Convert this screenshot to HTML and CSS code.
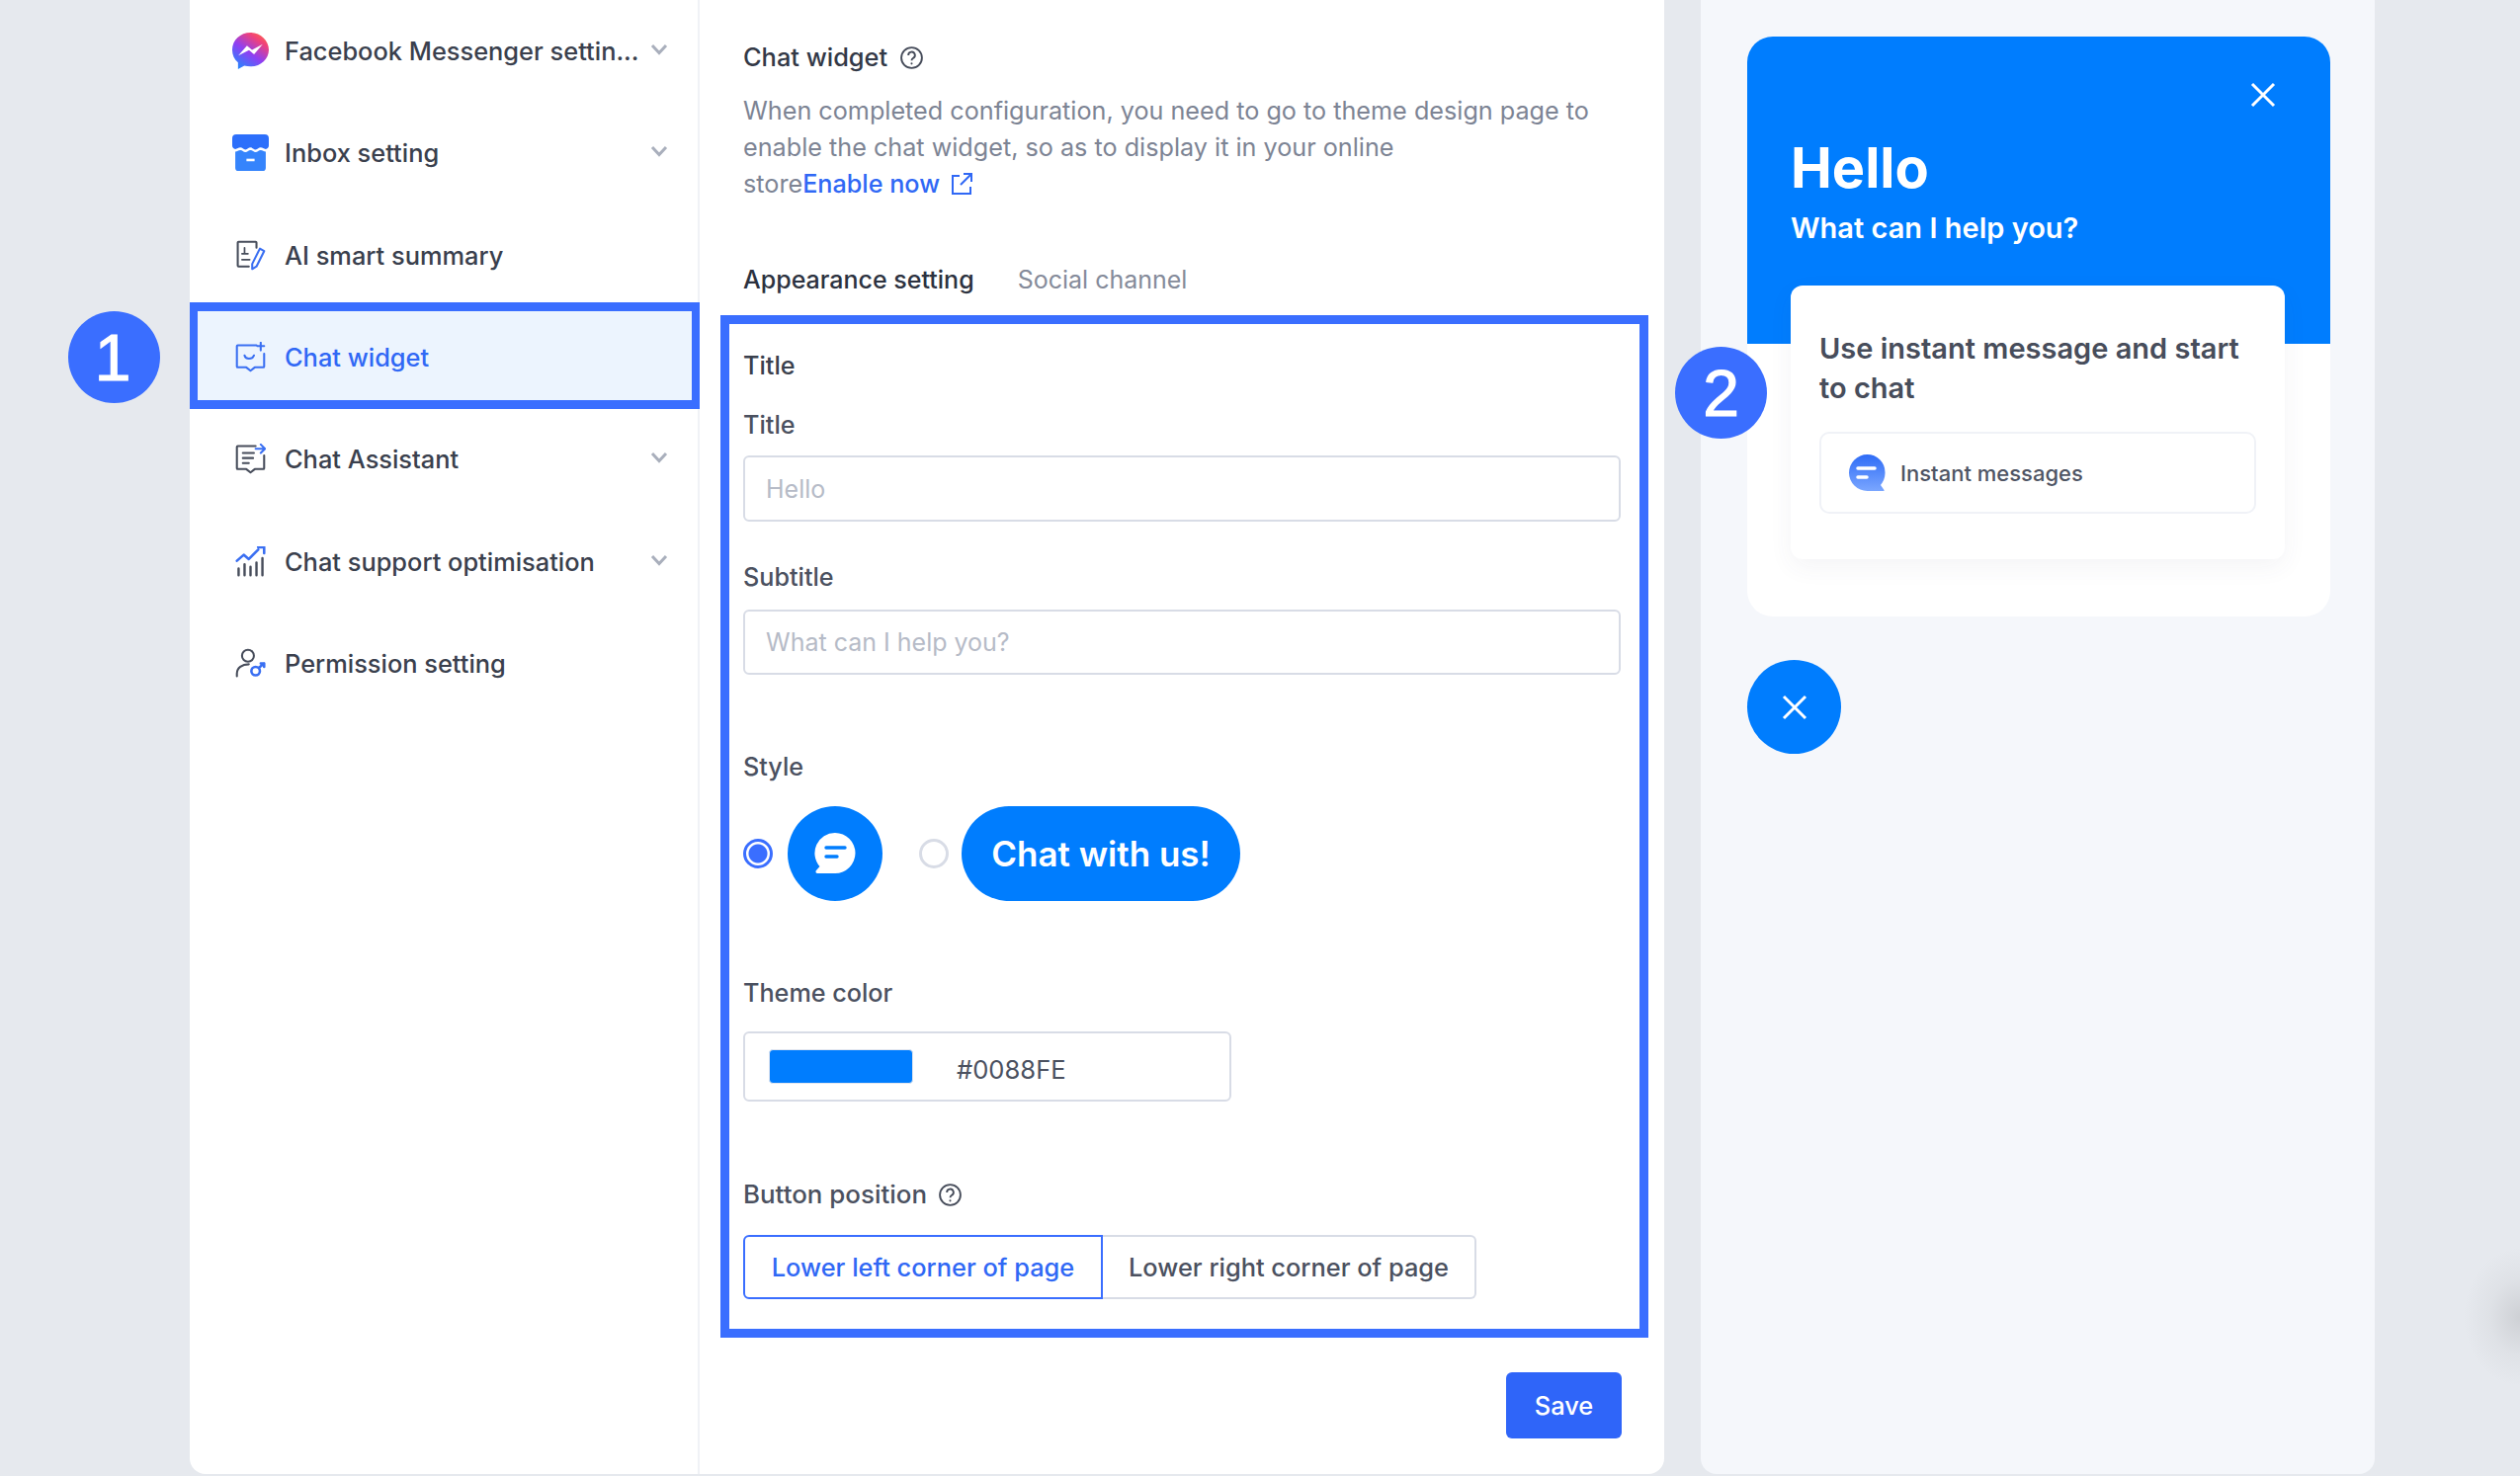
FILE: index.html
```html
<!DOCTYPE html>
<html lang="en">
<head>
  <meta charset="UTF-8">
  <meta name="viewport" content="width=device-width, initial-scale=1.0">
  <title>Chat widget</title>
  <link rel="stylesheet" href="styles.css">
</head>
<body>

<div class="page">
  <div class="settings-card">
    <nav class="side-nav">
      <div class="nav-item">
        <svg class="nav-icon" viewBox="0 0 36 36">
          <defs>
            <linearGradient id="msgGrad" x1="0.15" y1="1" x2="0.85" y2="0">
              <stop offset="0" stop-color="#1f8bff"/>
              <stop offset="0.45" stop-color="#8f3ff2"/>
              <stop offset="0.8" stop-color="#f0417a"/>
              <stop offset="1" stop-color="#ff6a45"/>
            </linearGradient>
          </defs>
          <path d="M18 0C8 0 0 7.400 0 17c0 5 2.100 9.400 5.700 12.400V36l6.200-3.400c1.900.5 4 .8 6.100.8 10 0 18-7.400 18-16.400S28 0 18 0z" fill="url(#msgGrad)"/>
          <path d="M6 22.500l8.500-9.500 5 4 10.500-5.500-8.500 9.800-5-4z" fill="#fff"/>
        </svg>
        <span class="nav-label">Facebook Messenger settin...</span>
        <svg class="nav-arrow" viewBox="0 0 18 12"><path d="M2 2l7 7.500L16 2"/></svg>
      </div>
      <div class="nav-item">
        <svg class="nav-icon" viewBox="0 0 36 36">
          <path d="M4 0h28a4 4 0 0 1 4 4v7c0 2-1.500 3.500-3 3.500-2 0-3-1.500-5-1.500s-3 2-5 2-3-2-5-2-3 2-5 2-3-2-5-2-3 1.500-5 1.500c-1.500 0-3-1.500-3-3.500V4a4 4 0 0 1 4-4z" fill="#2d6ffb"/>
          <path d="M3 17c2 0 3-1.500 5-1.500s3 2 5 2 3-2 5-2 3 2 5 2 3-2 5-2 3 1.500 5 1.500v16a3 3 0 0 1-3 3H6a3 3 0 0 1-3-3z" fill="#3584fc"/>
          <rect x="14" y="24" width="8" height="2.500" fill="#fff"/>
        </svg>
        <span class="nav-label">Inbox setting</span>
        <svg class="nav-arrow" viewBox="0 0 18 12"><path d="M2 2l7 7.500L16 2"/></svg>
      </div>
      <div class="nav-item nav-item-plain">
        <svg class="nav-icon line-icon" viewBox="0 0 36 36">
          <path d="M25 9V3a1 1 0 0 0-1-1H4a1 1 0 0 0-1 1v27a1 1 0 0 0 1 1h12"/>
          <path d="M8 16h7M8 23h9M11 9v6" stroke-width="2"/>
          <path class="accent" d="M29 10l5 3-9 18-5 3v-6z"/>
        </svg>
        <span class="nav-label">AI smart summary</span>
      </div>
      <div class="nav-item nav-item-plain nav-item-active">
        <svg class="nav-icon line-icon accent-all" viewBox="0 0 36 36">
          <path d="M25 4H3a1 1 0 0 0-1 1v24a1 1 0 0 0 1 1h10l5 4 5-4h10a1 1 0 0 0 1-1V14"/>
          <path d="M11 16c1 5 9 5 11 0"/>
          <path d="M30 1v9M26 5h8"/>
        </svg>
        <span class="nav-label">Chat widget</span>
      </div>
      <div class="nav-item">
        <svg class="nav-icon line-icon" viewBox="0 0 36 36">
          <path d="M24 3H3a1 1 0 0 0-1 1v25a1 1 0 0 0 1 1h10l5 4 5-4h10a1 1 0 0 0 1-1V14"/>
          <path d="M9 11h13M9 17h12M9 23h7"/>
          <path class="accent" d="M24 6h11M30 1l5 5-5 5"/>
        </svg>
        <span class="nav-label">Chat Assistant</span>
        <svg class="nav-arrow" viewBox="0 0 18 12"><path d="M2 2l7 7.500L16 2"/></svg>
      </div>
      <div class="nav-item">
        <svg class="nav-icon line-icon" viewBox="0 0 36 36">
          <path class="accent" d="M2 17l8-7 6 5 11-11M27 1h7v7" stroke-width="3"/>
          <path d="M4 26v8M11 21v13M18 24v10M25 19v15M32 14v20" stroke-width="2.800"/>
        </svg>
        <span class="nav-label">Chat support optimisation</span>
        <svg class="nav-arrow" viewBox="0 0 18 12"><path d="M2 2l7 7.500L16 2"/></svg>
      </div>
      <div class="nav-item nav-item-plain">
        <svg class="nav-icon line-icon" viewBox="0 0 36 36">
          <circle cx="15" cy="9" r="7"/>
          <path d="M2 33v-3c0-7 6-11 14-11"/>
          <circle class="accent" cx="24" cy="27" r="5" stroke-width="3"/>
          <path class="accent" d="M28 23l6-5M30 18h4v4" stroke-width="3"/>
        </svg>
        <span class="nav-label">Permission setting</span>
      </div>
    </nav>

    <div class="settings-content">
      <div class="content-title">
        Chat widget
        <svg class="help-icon" viewBox="0 0 24 24"><circle cx="12" cy="12" r="10"/><path d="M8.800 9.500a3.200 3.200 0 1 1 4.700 2.800c-1 .6-1.500 1.200-1.500 2.400"/><circle class="help-dot" cx="12" cy="17.600" r="1"/></svg>
      </div>
      <p class="content-desc">When completed configuration, you need to go to theme design page to enable the chat widget, so as to display it in your online <span class="enable-wrap">store<a class="enable-link" href="#">Enable now <svg class="link-icon" viewBox="0 0 24 24"><path d="M10 4H3v18h18v-7M14 2h8v8M22 2L11 13"/></svg></a></span></p>

      <div class="tabs">
        <span class="tab tab-active">Appearance setting</span>
        <span class="tab">Social channel</span>
      </div>

      <section class="form-box">
        <div class="form-heading">Title</div>
        <label class="field-label field-label-first">Title</label>
        <input class="text-input" type="text" placeholder="Hello">
        <label class="field-label field-label-sub">Subtitle</label>
        <input class="text-input text-input-sub" type="text" placeholder="What can I help you?">

        <div class="field-label field-label-style">Style</div>
        <div class="style-row">
          <span class="radio radio-on"></span>
          <span class="round-btn">
            <svg class="bubble-icon" viewBox="0 0 42 42">
              <path d="M21 0a20.500 20.500 0 0 1 0 41H3c-1.500 0-2-2-1-3l3.500-4A20.500 20.500 0 0 1 21 0z" fill="#fff"/>
              <path d="M12 15h19M12 24h11" stroke="#007dfe" stroke-width="3.400" stroke-linecap="round"/>
            </svg>
          </span>
          <span class="radio radio-off"></span>
          <span class="pill-btn">Chat with us!</span>
        </div>

        <div class="field-label field-label-theme">Theme color</div>
        <div class="color-input">
          <span class="color-swatch"></span>
          <span class="color-value">#0088FE</span>
        </div>

        <div class="field-label field-label-pos">
          Button position
          <svg class="help-icon" viewBox="0 0 24 24"><circle cx="12" cy="12" r="10"/><path d="M8.800 9.500a3.200 3.200 0 1 1 4.700 2.800c-1 .6-1.500 1.200-1.500 2.400"/><circle class="help-dot" cx="12" cy="17.600" r="1"/></svg>
        </div>
        <div class="segment">
          <span class="segment-item segment-on">Lower left corner of page</span>
          <span class="segment-item">Lower right corner of page</span>
        </div>
      </section>

      <div class="form-footer">
        <button class="save-btn">Save</button>
      </div>
    </div>
  </div>

  <aside class="preview-panel">
    <div class="widget-card">
      <div class="widget-head">
        <svg class="widget-close" viewBox="0 0 26 26"><path d="M2 2l22 22M24 2L2 24"/></svg>
        <div class="widget-hello">Hello</div>
        <div class="widget-sub">What can I help you?</div>
      </div>
      <div class="widget-body">
        <div class="widget-msg">Use instant message and start to chat</div>
        <div class="widget-channel">
          <svg class="channel-icon" viewBox="0 0 37 37">
            <defs>
              <linearGradient id="chanGrad" x1="0" y1="0" x2="0" y2="1">
                <stop offset="0" stop-color="#2f6cf6"/>
                <stop offset="1" stop-color="#7aa6ff"/>
              </linearGradient>
            </defs>
            <path d="M18.500 0a18 18 0 0 1 18 18v1c0 5-2 9-4.500 12l3.500 5c.3.500 0 1-.5 1H18.500a18.500 18.500 0 0 1 0-37z" fill="url(#chanGrad)"/>
            <path d="M9 14h17M9 23h9" stroke="#fff" stroke-width="3.500" stroke-linecap="round"/>
          </svg>
          <span class="channel-name">Instant messages</span>
        </div>
      </div>
    </div>
    <div class="fab">
      <svg class="fab-close" viewBox="0 0 26 26"><path d="M2 2l22 22M24 2L2 24"/></svg>
    </div>
  </aside>
</div>

<span class="callout callout-one">1</span>
<span class="callout callout-two">2</span>

</body>
</html>
```

FILE: styles.css
```css
* {
  margin: 0;
  padding: 0;
  box-sizing: border-box;
}

body {
  font-family: Inter, "Noto Sans", sans-serif;
  background-color: #e6e9ee;
  color: #3c4250;
  width: 2550px;
  height: 1494px;
  overflow: hidden;
  position: relative;
}

/* soft shadow at the window edge */
body::after {
  content: "";
  position: absolute;
  right: -57px;
  top: 1263px;
  width: 114px;
  height: 140px;
  border-radius: 50%;
  background: radial-gradient(closest-side, rgba(110, 110, 112, 0.2), rgba(110, 110, 112, 0.06) 55%, rgba(110, 110, 112, 0));
}

.page {
  display: flex;
  gap: 37px;
  padding-left: 192px;
  height: 1492px;
}

.settings-card {
  width: 1492px;
  display: flex;
  background-color: white;
  border-radius: 0 0 16px 16px;
}

/* left nav */
.side-nav {
  width: 516px;
  flex-shrink: 0;
  border-right: 2px solid #f0f2f6;
}

.nav-item {
  height: 103.3px;
  display: flex;
  align-items: center;
  padding: 0 30px 0 43px;
  position: relative;
  font-size: 25.4px;
  font-weight: 500;
  color: #3a404d;
}

.nav-icon {
  width: 37px;
  height: 37px;
  flex-shrink: 0;
  margin-right: 16px;
}

.line-icon {
  fill: none;
  stroke: #474d5b;
  stroke-width: 2.4;
  stroke-linejoin: round;
  stroke-linecap: round;
  padding: 3px;
}

.line-icon .accent,
.accent-all {
  stroke: #3a6ff2;
}

.nav-label {
  flex-grow: 1;
  white-space: nowrap;
  position: relative;
  z-index: 1;
}

.nav-arrow {
  width: 18px;
  height: 12px;
  fill: none;
  stroke: #a9afbc;
  stroke-width: 3;
  flex-shrink: 0;
  margin-top: -3px;
}

.nav-item-active {
  color: #3068f5;
}

.nav-item-active .nav-icon {
  position: relative;
  z-index: 1;
}

/* the highlight drawn round the active row */
.nav-item-active::after {
  content: "";
  position: absolute;
  left: 0;
  right: -2px;
  top: -4px;
  bottom: -1px;
  background-color: #ecf4fe;
  border: 8px solid #3a6eff;
  border-top-width: 9px;
  border-bottom-width: 9px;
}

/* middle column */
.settings-content {
  flex-grow: 1;
  padding: 0 16px 0 21px;
  display: flex;
  flex-direction: column;
}

.content-title {
  margin: 42px 0 0 23px;
  font-size: 25.4px;
  line-height: 32px;
  font-weight: 500;
  color: #333947;
  display: flex;
  align-items: center;
  gap: 12px;
}

.help-icon {
  width: 25px;
  height: 25px;
  fill: none;
  stroke: #464c5a;
  stroke-width: 1.800;
}

.help-dot {
  fill: #464c5a;
  stroke: none;
}

.content-desc {
  margin: 20px 0 0 23px;
  width: 890px;
  font-size: 25.2px;
  line-height: 37px;
  color: #7d8494;
}

.enable-wrap {
  white-space: nowrap;
}

.enable-link {
  color: #3068f5;
  text-decoration: none;
  font-weight: 500;
}

.link-icon {
  width: 24px;
  height: 24px;
  fill: none;
  stroke: #3068f5;
  stroke-width: 2;
  vertical-align: -3px;
  margin-left: 3px;
}

.tabs {
  display: flex;
  gap: 44px;
  margin: 62px 0 0 23px;
  font-size: 25px;
  line-height: 32px;
}

.tab {
  color: #858b9a;
}

.tab-active {
  color: #2c3240;
  font-weight: 500;
}

/* annotated form */
.form-box {
  margin-top: 20px;
  height: 1035px;
  width: 939px;
  flex-shrink: 0;
  border: 9px solid #3a6eff;
  padding: 0 19px 0 14px;
}

.form-heading {
  margin-top: 26px;
  font-size: 25.2px;
  line-height: 32px;
  font-weight: 500;
  color: #3a404d;
}

.field-label {
  font-size: 25.2px;
  line-height: 32px;
  font-weight: 500;
  color: #4b5160;
}

.field-label-first {
  display: block;
  margin-top: 28px;
}

.field-label-sub {
  display: block;
  margin-top: 40px;
}

.field-label-style {
  margin-top: 77px;
}

.field-label-theme {
  margin-top: 77px;
}

.field-label-pos {
  margin-top: 78px;
  font-size: 25.9px;
  display: flex;
  align-items: center;
  gap: 11px;
}

.text-input {
  display: block;
  width: 888px;
  height: 67px;
  margin-top: 15px;
  padding: 0 21px;
  border: 2px solid #d8dce6;
  border-radius: 6px;
  font-family: inherit;
  font-size: 25px;
  color: #3a404d;
  outline: none;
}

.text-input-sub {
  height: 66px;
  margin-top: 17px;
}

.text-input::placeholder {
  color: #b6bbc7;
  opacity: 1;
}

.style-row {
  display: flex;
  align-items: center;
  margin-top: 24px;
}

.radio {
  width: 30px;
  height: 30px;
  border-radius: 50%;
  flex-shrink: 0;
}

.radio-on {
  border: 3px solid #3a6eff;
  background: radial-gradient(circle, #3a6eff 0 9px, white 10px);
}

.radio-off {
  border: 3px solid #d8dce6;
  margin: 0 13px 0 37px;
}

.round-btn {
  width: 96px;
  height: 96px;
  margin-left: 15px;
  border-radius: 50%;
  background-color: #007dfe;
  display: flex;
  align-items: center;
  justify-content: center;
}

.bubble-icon {
  width: 42px;
  height: 42px;
}

.pill-btn {
  height: 96px;
  width: 282px;
  border-radius: 48px;
  background-color: #007dfe;
  color: white;
  font-size: 35px;
  font-weight: 600;
  display: flex;
  align-items: center;
  justify-content: center;
}

.color-input {
  width: 494px;
  height: 71px;
  margin-top: 23px;
  border: 2px solid #d8dce6;
  border-radius: 6px;
  display: flex;
  align-items: center;
  padding-left: 24px;
}

.color-swatch {
  width: 146px;
  height: 35px;
  border-radius: 4px;
  background-color: #007dfe;
  border: 1px solid #e1e5ee;
}

.color-value {
  margin: 6px 0 0 44px;
  font-size: 25.6px;
  color: #4b5160;
}

.segment {
  display: flex;
  margin-top: 25px;
  height: 65px;
}

.segment-item {
  height: 100%;
  width: 378px;
  border: 2px solid #d8dce6;
  border-left: none;
  border-radius: 0 6px 6px 0;
  display: flex;
  align-items: center;
  justify-content: center;
  font-size: 25.4px;
  font-weight: 500;
  color: #4b5160;
}

.segment-on {
  width: 364px;
  border: 2px solid #3a6eff;
  border-radius: 6px 0 0 6px;
  color: #3068f5;
}

.form-footer {
  display: flex;
  justify-content: flex-end;
  margin-top: 35px;
  padding-right: 27px;
}

.save-btn {
  width: 117px;
  height: 67px;
  background-color: #2f65f9;
  color: white;
  border: none;
  border-radius: 6px;
  font-family: inherit;
  font-size: 25.4px;
  font-weight: 500;
}

/* right preview */
.preview-panel {
  width: 682px;
  background-color: #f5f7fb;
  border-radius: 0 0 16px 16px;
  padding: 37px 45px 0 47px;
}

.widget-card {
  width: 590px;
  height: 587px;
  background-color: white;
  border-radius: 26px;
  overflow: hidden;
}

.widget-head {
  height: 311px;
  background-color: #007dfe;
  padding: 101px 44px 0 44px;
  position: relative;
  color: white;
}

.widget-close {
  position: absolute;
  right: 55px;
  top: 46px;
  width: 26px;
  height: 26px;
  fill: none;
  stroke: white;
  stroke-width: 3;
}

.widget-hello {
  font-size: 56px;
  line-height: 64px;
  font-weight: 700;
}

.widget-sub {
  margin-top: 9px;
  font-size: 29px;
  line-height: 40px;
  font-weight: 600;
}

.widget-body {
  position: relative;
  width: 500px;
  height: 277px;
  margin: -59px 0 0 44px;
  padding: 44px 29px 0;
  background-color: white;
  border-radius: 12px;
  box-shadow: 0 8px 24px rgba(60, 70, 100, 0.06);
}

.widget-msg {
  font-size: 29px;
  line-height: 40px;
  font-weight: 600;
  color: #474d5b;
}

.widget-channel {
  width: 442px;
  height: 83px;
  margin-top: 24px;
  border: 2px solid #f0f2f7;
  border-radius: 10px;
  display: flex;
  align-items: center;
  padding-left: 28px;
}

.channel-icon {
  width: 37px;
  height: 37px;
  flex-shrink: 0;
}

.channel-name {
  margin-left: 15px;
  font-size: 22px;
  font-weight: 500;
  color: #4f5564;
}

.fab {
  width: 95px;
  height: 95px;
  margin-top: 44px;
  border-radius: 50%;
  background-color: #007dfe;
  display: flex;
  align-items: center;
  justify-content: center;
}

.fab-close {
  width: 26px;
  height: 26px;
  fill: none;
  stroke: white;
  stroke-width: 3;
}

/* numbered callouts */
.callout {
  position: absolute;
  width: 93px;
  height: 93px;
  border-radius: 50%;
  background-color: #3a6eff;
  color: white;
  font-family: "Liberation Sans", Arial, sans-serif;
  font-size: 66px;
  -webkit-text-stroke: 1.2px white;
  display: flex;
  align-items: center;
  justify-content: center;
}

.callout-one {
  left: 69px;
  top: 315px;
  padding-right: 3px;
}

.callout-two {
  left: 1695px;
  top: 351px;
}
```
